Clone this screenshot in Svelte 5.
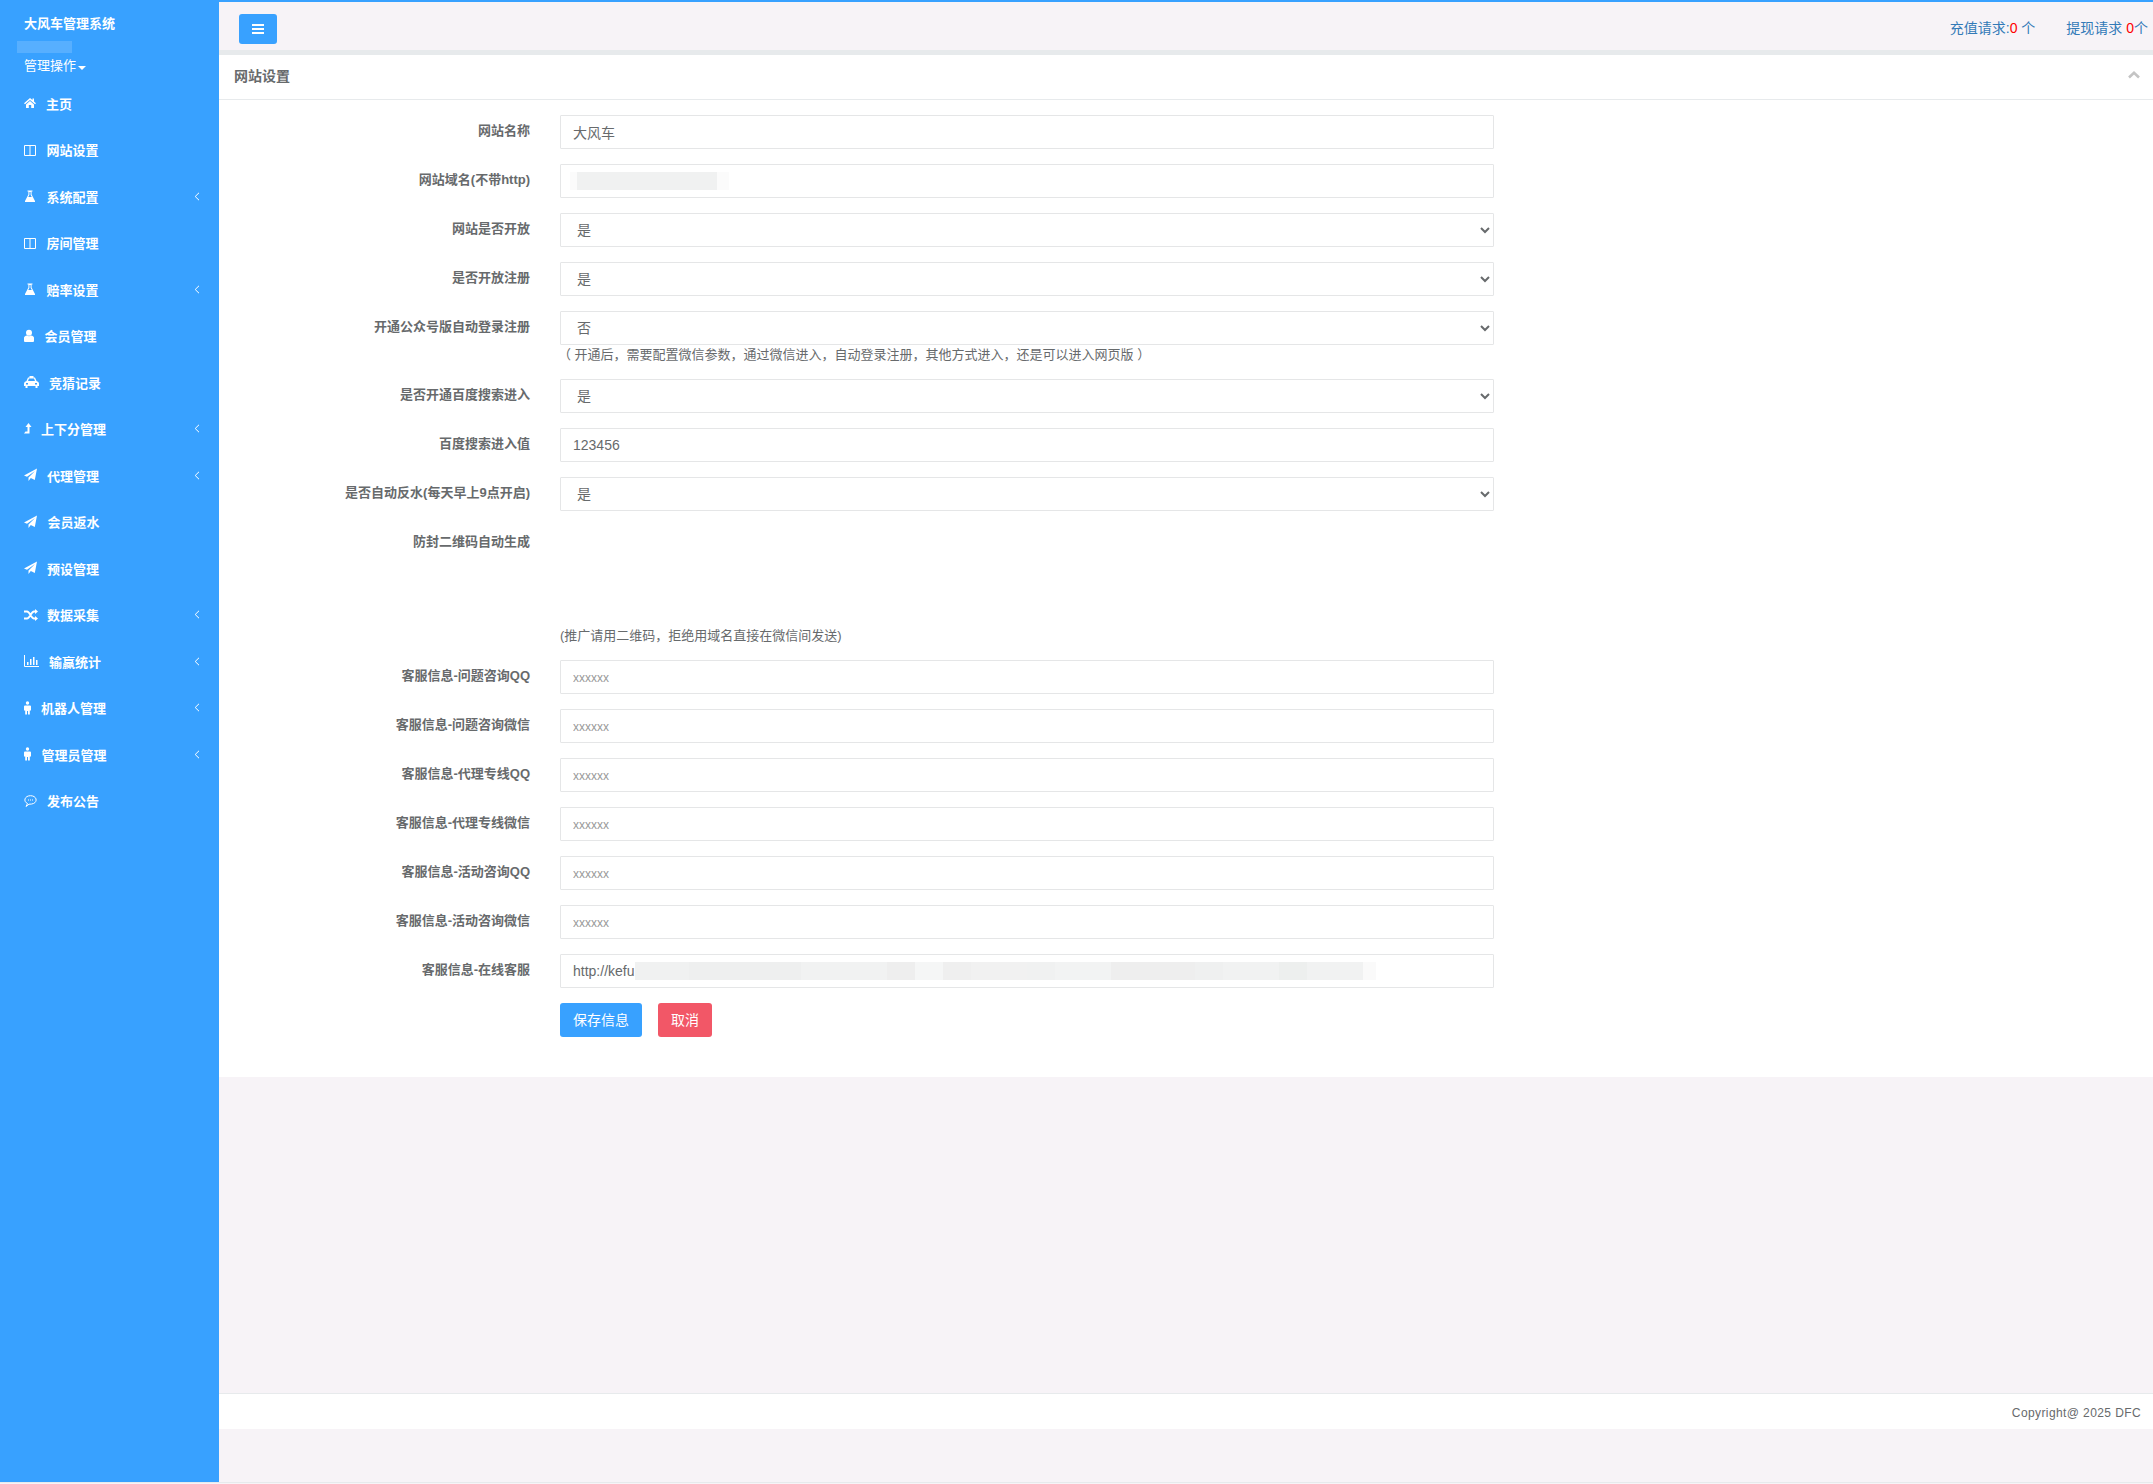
<script>
	const icons = {
		home: { fill: 'M6 2L0 7.2 1 8.2 6 4l5 4.2 1-1-2-1.8V2.5H8.5V4zM2 8.4L6 5l4 3.4V12H7.2V9H4.8v3H2z' },
		columns: { stroke: 'M.5 2.5h11v10H.5zM6 2.5v10' },
		flask: {
			fill: 'M3.5 1.5h5v1h-.9v3L11 12v1H1v-1l3.4-6.5v-3h-.9zM5.4 3v3L4.2 8h3.6L6.6 6V3z'
		},
		user: {
			fill: 'M5 .8a3 3 0 1 1 0 6 3 3 0 0 1 0-6zM0 12V9q0-2 3-2.5 2 1.5 4 0Q10 7 10 9v3q0 1-1 1H1q-1 0-1-1z'
		},
		taxi: {
			fill: 'M2.5 6L4 2.5h1.5V1h4v1.5H11L12.5 6q2.5.5 2.5 2.5V11h-1.5v2h-2v-2h-8v2h-2v-2H0V8.5Q0 6.5 2.5 6zM4 6h7l-1-2.500H5zM2 8v1.500h2V8zM11 8v1.500h2V8z'
		},
		level: { fill: 'M4.500 1l3 4h-2v6.500H0l1.500-2h2V5h-2z' },
		plane: { fill: 'M13 .5L10.800 12l-4-2-2.300 3V9.500L11 3 3 8.800 0 7.500z' },
		random: {
			fill: 'M11 1l3 2.500L11 6zM11 8l3 2.500L11 13z',
			stroke: 'M0 3.500h3c3 0 4 7 7 7h2M0 10.500h3c3 0 4-7 7-7h2',
			width: 1.800
		},
		chart: {
			fill: 'M3 8h1.500v3H3zM6 5h1.500v6H6zM9 3h1.500v8H9zM12 6h1.500v5H12z',
			stroke: 'M.5 1v11.500H15'
		},
		male: {
			fill: 'M3.500.3a1.700 1.700 0 1 1 0 3.400 1.700 1.700 0 0 1 0-3.400zM1 4.500h5q1 0 1 1v4H5.800v4H4V10H3v3.500H1.200v-4H0v-4q0-1 1-1z'
		},
		comment: {
			fill: 'M4 5.500h1v1H4zM6 5.500h1v1H6zM8 5.500h1v1H8z',
			stroke: 'M3.500 9.500C-1 7.500.5 1.700 6.500 1.700s7.500 5.800 3 7.800q-2 .8-4.500.7L2 12.500z'
		}
	};

	// slot = distance from the icon's left edge to the label
	const nav = [
		{ label: '主页', icon: 'home', slot: 22 },
		{ label: '网站设置', icon: 'columns', slot: 22.5 },
		{ label: '系统配置', icon: 'flask', slot: 22.5, sub: true },
		{ label: '房间管理', icon: 'columns', slot: 22.5 },
		{ label: '赔率设置', icon: 'flask', slot: 22.5, sub: true },
		{ label: '会员管理', icon: 'user', slot: 20.5 },
		{ label: '竞猜记录', icon: 'taxi', slot: 25 },
		{ label: '上下分管理', icon: 'level', slot: 17, sub: true },
		{ label: '代理管理', icon: 'plane', slot: 23, sub: true },
		{ label: '会员返水', icon: 'plane', slot: 23.5 },
		{ label: '预设管理', icon: 'plane', slot: 23 },
		{ label: '数据采集', icon: 'random', slot: 23, sub: true },
		{ label: '输赢统计', icon: 'chart', slot: 25, sub: true },
		{ label: '机器人管理', icon: 'male', slot: 17, sub: true },
		{ label: '管理员管理', icon: 'male', slot: 17.5, sub: true },
		{ label: '发布公告', icon: 'comment', slot: 23 }
	];

	const kefuBlot = [
		[54, '#f0f1f1'], [112, '#eeefef'], [86, '#f1f2f2'], [28, '#eeeeee'], [28, '#f5f6f6'],
		[28, '#efefef'], [56, '#f1f1f1'], [28, '#f0f1f1'], [56, '#f2f3f3'], [84, '#eeeeee'],
		[28, '#eff0f0'], [56, '#f1f2f2'], [28, '#edefee'], [56, '#f1f2f2'], [13, '#fafafa']
	];

	const topRows = [
		{ label: '网站名称', value: '大风车' },
		{ label: '网站域名(不带http)', value: '', blot: true },
		{ label: '网站是否开放', value: '是', select: true },
		{ label: '是否开放注册', value: '是', select: true },
		{
			label: '开通公众号版自动登录注册',
			value: '否',
			select: true,
			hint: '（ 开通后，需要配置微信参数，通过微信进入，自动登录注册，其他方式进入，还是可以进入网页版 ）'
		},
		{ label: '是否开通百度搜索进入', value: '是', select: true },
		{ label: '百度搜索进入值', value: '123456' },
		{ label: '是否自动反水(每天早上9点开启)', value: '是', select: true }
	];

	const serviceRows = [
		{ label: '客服信息-问题咨询QQ', value: '', placeholder: 'xxxxxx' },
		{ label: '客服信息-问题咨询微信', value: '', placeholder: 'xxxxxx' },
		{ label: '客服信息-代理专线QQ', value: '', placeholder: 'xxxxxx' },
		{ label: '客服信息-代理专线微信', value: '', placeholder: 'xxxxxx' },
		{ label: '客服信息-活动咨询QQ', value: '', placeholder: 'xxxxxx' },
		{ label: '客服信息-活动咨询微信', value: '', placeholder: 'xxxxxx' },
		{ label: '客服信息-在线客服', value: 'http://kefu', kefu: true }
	];
</script>

{#snippet field(row)}
	<div class="form-group">
		<span class="control-label">{row.label}</span>
		<div class="control">
			{#if row.select}
				<select class="form-control" value={row.value}>
					<option>是</option>
					<option>否</option>
				</select>
			{:else}
				<input class="form-control" type="text" value={row.value} placeholder={row.placeholder} />
			{/if}
			{#if row.blot}
				<span class="blot-domain"><i></i></span>
			{/if}
			{#if row.kefu}
				<span class="blot-kefu">
					{#each kefuBlot as [w, c]}
						<i style="width: {w}px; background: {c}"></i>
					{/each}
				</span>
			{/if}
			{#if row.hint}
				<div class="help">{row.hint}</div>
			{/if}
		</div>
	</div>
{/snippet}

<div class="wrapper">
	<aside class="sidebar">
		<div class="brand">大风车管理系统</div>
		<div class="brand-blot"></div>
		<div class="profile">管理操作<span class="caret"></span></div>
		<ul class="nav">
			{#each nav as item}
				<li>
					<span class="nav-icon" style="width: {item.slot}px">
						<svg width="16" height="14" viewBox="0 0 16 14">
							{#if icons[item.icon].fill}
								<path d={icons[item.icon].fill} fill="#fff" fill-rule="evenodd" />
							{/if}
							{#if icons[item.icon].stroke}
								<path
									d={icons[item.icon].stroke}
									fill="none"
									stroke="#fff"
									stroke-width={icons[item.icon].width ?? 1}
								/>
							{/if}
						</svg>
					</span>
					<span class="nav-label">{item.label}</span>
					{#if item.sub}
						<svg class="arrow" width="6" height="9" viewBox="0 0 6 9">
							<path d="M5 .8L1.200 4.500 5 8.200" fill="none" stroke="#fff" stroke-width="1" />
						</svg>
					{/if}
				</li>
			{/each}
		</ul>
	</aside>

	<div class="page">
		<header class="topbar">
			<button class="toggle" type="button" aria-label="菜单">
				<span></span><span></span><span></span>
			</button>
			<div class="requests">
				<a href="#top">充值请求:<b>0</b> 个</a>
				<a href="#top">提现请求 <b>0</b>个</a>
			</div>
		</header>

		<section class="panel">
			<div class="panel-title">
				<h5>网站设置</h5>
				<svg width="12" height="8" viewBox="0 0 12 8">
					<path d="M1 6.500L6 1.800l5 4.700" fill="none" stroke="#c4c4c4" stroke-width="2.600" />
				</svg>
			</div>
			<form class="panel-body">
				{#each topRows as row}
					{@render field(row)}
				{/each}

				<div class="form-group">
					<span class="control-label">防封二维码自动生成</span>
					<div class="control">
						<div class="qr"></div>
						<div class="help note">(推广请用二维码，拒绝用域名直接在微信间发送)</div>
					</div>
				</div>

				{#each serviceRows as row}
					{@render field(row)}
				{/each}

				<div class="actions">
					<button class="btn primary" type="button">保存信息</button>
					<button class="btn danger" type="button">取消</button>
				</div>
			</form>
		</section>

		<footer class="footer">Copyright@ 2025 DFC</footer>
	</div>
</div>

<style>
	:global(body) {
		margin: 0;
		background: #f7f3f7;
	}

	.wrapper {
		display: flex;
		height: 1482px;
		border-bottom: 1px solid #e7eaec;
		font-family: 'Liberation Sans', 'Noto Sans CJK SC', sans-serif;
		font-size: 13px;
		color: #676a6c;
	}

	.sidebar {
		flex: none;
		box-sizing: border-box;
		width: 219px;
		padding-top: 14px;
		background: #38a1ff;
		color: #fff;
	}

	.brand {
		padding-left: 24px;
		line-height: 20px;
		font-weight: 600;
	}

	.brand-blot {
		width: 55px;
		height: 12px;
		margin: 7px 0 0 17px;
		background: #57afff;
	}

	.profile {
		display: flex;
		align-items: center;
		margin-top: 3px;
		padding-left: 24px;
		line-height: 20px;
	}

	.caret {
		margin: 3px 0 0 2px;
		border-top: 4px solid #fff;
		border-left: 4px solid transparent;
		border-right: 4px solid transparent;
	}

	.nav {
		margin: 4px 0 0;
		padding: 0;
		list-style: none;
	}

	.nav li {
		display: flex;
		align-items: center;
		box-sizing: border-box;
		height: 46.500px;
		padding: 0 19px 0 24px;
		font-weight: 600;
	}

	.nav-icon {
		display: flex;
		flex: none;
	}

	.nav-label {
		flex: 1;
	}

	.arrow {
		flex: none;
	}

	.page {
		display: flex;
		flex: 1;
		flex-direction: column;
		min-width: 0;
		border-top: 2px solid #38a1ff;
	}

	.topbar {
		display: flex;
		flex: none;
		align-items: center;
		justify-content: space-between;
		box-sizing: border-box;
		height: 53px;
		padding: 1px 5px 0 20px;
		border-bottom: 5px solid #e7eaec;
		background: #f7f3f7;
	}

	.toggle {
		display: flex;
		flex-direction: column;
		align-items: center;
		justify-content: center;
		gap: 2px;
		width: 38px;
		height: 30px;
		margin-top: 5px;
		padding: 0;
		border: 0;
		border-radius: 3px;
		background: #38a1ff;
	}

	.toggle span {
		width: 12px;
		height: 2px;
		background: #fff;
	}

	.requests {
		display: flex;
		gap: 31px;
		font-size: 14px;
	}

	.requests a {
		color: #337ab7;
		text-decoration: none;
	}

	.requests b {
		color: #f00;
		font-weight: 400;
	}

	.panel {
		flex: none;
		background: #fff;
	}

	.panel-title {
		display: flex;
		align-items: center;
		justify-content: space-between;
		box-sizing: border-box;
		height: 45px;
		padding: 0 13px 4px 15px;
		border-bottom: 1px solid #e7eaec;
	}

	.panel-title h5 {
		margin: 0;
		font-size: 14px;
		font-weight: 600;
	}

	.panel-body {
		padding: 15px 0 40px;
	}

	.form-group {
		display: flex;
		gap: 30px;
		margin-bottom: 15px;
	}

	.control-label {
		flex: none;
		box-sizing: border-box;
		width: 311px;
		padding-top: 6px;
		line-height: 20px;
		text-align: right;
		font-weight: 600;
	}

	.control {
		position: relative;
		flex: none;
		width: 934px;
	}

	.form-control {
		display: block;
		box-sizing: border-box;
		width: 100%;
		height: 34px;
		padding: 6px 12px;
		border: 1px solid #e5e6e7;
		border-radius: 1px;
		background: #fff;
		font-family: inherit;
		font-size: 14px;
		color: #676a6c;
		outline: none;
	}

	.form-control::placeholder {
		font-size: 12px;
		color: #999;
	}

	.help {
		margin-left: -2px;
		line-height: 19px;
	}

	.qr {
		height: 100px;
	}

	.note {
		margin-left: 0;
	}

	.blot-domain {
		position: absolute;
		top: 8px;
		left: 10px;
		display: flex;
		justify-content: flex-start;
		width: 159px;
		height: 18px;
		padding-left: 7px;
		box-sizing: border-box;
		background: #fbfbfb;
	}

	.blot-domain i {
		width: 140px;
		background: #f0f1f1;
	}

	.blot-kefu {
		position: absolute;
		top: 8px;
		left: 75px;
		display: flex;
		height: 18px;
	}

	.actions {
		display: flex;
		gap: 16px;
		margin-left: 341px;
	}

	.btn {
		height: 34px;
		padding: 0 0 2px;
		border: 0;
		border-radius: 3px;
		font-family: inherit;
		font-size: 14px;
		color: #fff;
	}

	.primary {
		width: 82px;
		background: #38a1ff;
	}

	.danger {
		width: 54px;
		background: #f25767;
	}

	.footer {
		flex: none;
		box-sizing: border-box;
		height: 36px;
		margin-top: 316px;
		padding: 9px 12px 0 0;
		border-top: 1px solid #e7eaec;
		background: #fff;
		line-height: 20px;
		text-align: right;
		font-size: 12px;
		letter-spacing: 0.4px;
	}
</style>
